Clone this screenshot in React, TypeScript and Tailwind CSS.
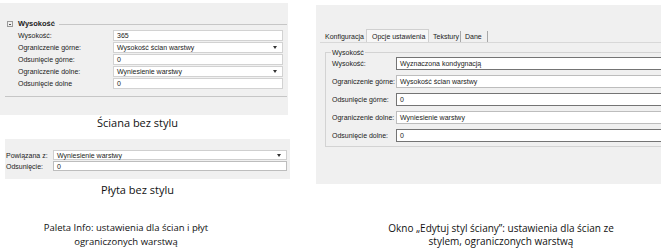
import React from "react";

const ui = "[font-family:'Liberation_Sans',Arial,sans-serif] text-[7px] leading-none text-[#222]";
const cap = "[font-family:'Open_Sans','Noto_Sans',sans-serif] text-[#111]";

const Arrow = () => (
  <svg width="4" height="3" viewBox="0 0 4 3">
    <path d="M0 0h4L2 3z" fill="#333" />
  </svg>
);

type RowProps = { label: string; value: string; combo?: boolean };

// Paleta Info rows
const InfoRow = ({ label, value, combo }: RowProps) => (
  <div className="flex items-center h-[11px]">
    <div className="w-[113px] pl-[18px]">{label}</div>
    <div className="w-[170px] h-full bg-white border border-[#d2d2d2] flex items-center pl-[3px] pr-[5px]">
      <span className="flex-1">{value}</span>
      {combo && <Arrow />}
    </div>
  </div>
);

// "Edytuj styl ściany" rows
const DlgRow = ({ label, value, combo }: RowProps) => (
  <div className="flex items-center h-[13px]">
    <div className="w-[70px] pl-[6px] shrink-0">{label}</div>
    <div
      className={
        "flex-1 h-full bg-white border flex items-center pl-[3px] " +
        (combo ? "border-[#bdbdbd]" : "border-[#747474]")
      }
    >
      {value}
    </div>
  </div>
);

export default function App() {
  return (
    <div className={"w-[661px] h-[252px] bg-white flex overflow-hidden " + ui}>
      {/* lewa kolumna */}
      <div className="w-[290px] shrink-0 flex flex-col">
        <div className="mt-[3px] w-[288px] h-[112px] bg-[#f0f0f0] pt-[17px]">
          <div className="flex items-center h-[8px] pl-[7px]">
            <div className="w-[6px] h-[6px] border border-[#9a9a9a] flex items-center justify-center">
              <div className="w-[2px] h-px bg-[#555]" />
            </div>
            <span className="ml-[5px] font-bold text-[7.5px]">Wysokość</span>
            <div className="flex-1 h-px bg-[#c6c6c6] ml-[4px] mr-[1px]" />
          </div>
          <div className="mt-[2px] flex flex-col gap-[1px]">
            <InfoRow label="Wysokość:" value="365" />
            <InfoRow label="Ograniczenie górne:" value="Wysokość ścian warstwy" combo />
            <InfoRow label="Odsunięcie górne:" value="0" />
            <InfoRow label="Ograniczenie dolne:" value="Wyniesienie warstwy" combo />
            <InfoRow label="Odsunięcie dolne" value="0" />
          </div>
          <div className="mt-[7px] ml-[5px] mr-[1px] h-px bg-[#c6c6c6]" />
        </div>
        <div className={"w-[275px] h-[16px] leading-[16px] text-center text-[11px] " + cap}>
          Ściana bez stylu
        </div>

        <div className="mt-[8px] ml-[5px] w-[285px] h-[40px] bg-[#f0f0f0] pt-[11px] flex flex-col gap-[1px]">
          <div className="flex items-center h-[10px]">
            <div className="w-[48px] pl-[1px]">Powiązana z:</div>
            <div className="w-[234px] h-full bg-white border border-[#cfcfcf] flex items-center pl-[3px] pr-[5px]">
              <span className="flex-1">Wyniesienie warstwy</span>
              <Arrow />
            </div>
          </div>
          <div className="flex items-center h-[10px]">
            <div className="w-[48px] pl-[1px]">Odsunięcie:</div>
            <div className="w-[234px] h-full bg-white border border-[#bdbdbd] flex items-center pl-[3px]">0</div>
          </div>
        </div>
        <div className={"mt-[3px] w-[275px] h-[16px] leading-[16px] text-center text-[11px] " + cap}>
          Płyta bez stylu
        </div>

        <div className={"mt-[23px] w-[252px] text-center text-[9.5px] leading-[14px] " + cap}>
          Paleta Info: ustawienia dla ścian i płyt
          <br />
          ograniczonych warstwą
        </div>
      </div>

      {/* prawa kolumna */}
      <div className="ml-[26px] flex-1 overflow-hidden flex flex-col">
        <div className="mt-[5px] h-[179px] bg-[#f0f0f0] pt-[24px]">
          <div className="flex items-end h-[13px] pl-[6px]">
            <div className="w-[44px] h-[11px] flex items-center pl-[3px]">Konfiguracja</div>
            <div className="w-[63px] h-[13px] flex items-center pl-[5px] border border-b-0 border-[#d0d0d0] bg-[#f7f7f7]">
              Opcje ustawienia
            </div>
            <div className="w-[32px] h-[11px] flex items-center pl-[4px] border-r border-[#a8a8a8]">Tekstury</div>
            <div className="w-[27px] h-[11px] flex items-center pl-[4px] border-r border-[#a8a8a8]">Dane</div>
          </div>
          <div className="h-px bg-[#d8d8d8] ml-[4px]" />
          <div className="relative mt-[9px] ml-[9px] w-[360px] h-[95px] border border-[#d3d3d3] pt-[4px] flex flex-col gap-[5px]">
            <span className="absolute top-[-4px] left-[5px] px-px bg-[#f0f0f0]">Wysokość</span>
            <DlgRow label="Wysokość:" value="Wyznaczona kondygnacją" />
            <DlgRow label="Ograniczenie górne:" value="Wysokość ścian warstwy" combo />
            <DlgRow label="Odsunięcie górne:" value="0" />
            <DlgRow label="Ograniczenie dolne:" value="Wyniesienie warstwy" combo />
            <DlgRow label="Odsunięcie dolne:" value="0" />
          </div>
        </div>
        <div className={"mt-[38px] pl-[25px] text-center text-[10px] leading-[13px] " + cap}>
          Okno „Edytuj styl ściany”: ustawienia dla ścian ze
          <br />
          stylem, ograniczonych warstwą
        </div>
      </div>
    </div>
  );
}
